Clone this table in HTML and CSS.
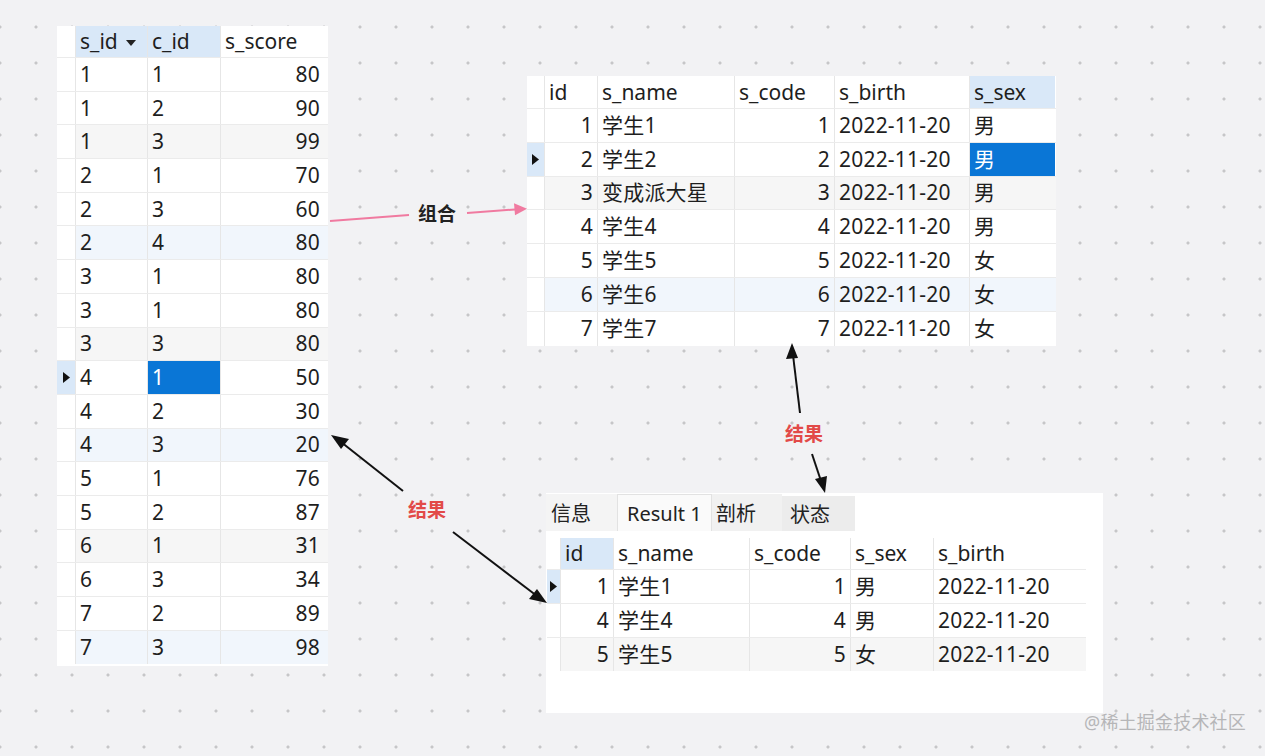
FILE: index.html
```html
<!DOCTYPE html>
<html lang="zh">
<head>
<meta charset="utf-8">
<title>SQL 组合结果</title>
<link rel="stylesheet" href="styles.css">
</head>
<body>
<div class="canvas">

  <div class="win win-score">
    <div class="tbl t-score">
      <div class="row head">
        <div class="c rh"></div>
        <div class="c hl">s_id <svg class="sort" width="10" height="6" viewBox="0 0 10 6"><path d="M0 0h10L5 6z" fill="#222"/></svg></div>
        <div class="c hl">c_id</div>
        <div class="c">s_score</div>
      </div>
      <div class="row"><div class="c rh"></div><div class="c">1</div><div class="c">1</div><div class="c r">80</div></div>
      <div class="row"><div class="c rh"></div><div class="c">1</div><div class="c">2</div><div class="c r">90</div></div>
      <div class="row g"><div class="c rh"></div><div class="c">1</div><div class="c">3</div><div class="c r">99</div></div>
      <div class="row"><div class="c rh"></div><div class="c">2</div><div class="c">1</div><div class="c r">70</div></div>
      <div class="row"><div class="c rh"></div><div class="c">2</div><div class="c">3</div><div class="c r">60</div></div>
      <div class="row b"><div class="c rh"></div><div class="c">2</div><div class="c">4</div><div class="c r">80</div></div>
      <div class="row"><div class="c rh"></div><div class="c">3</div><div class="c">1</div><div class="c r">80</div></div>
      <div class="row"><div class="c rh"></div><div class="c">3</div><div class="c">1</div><div class="c r">80</div></div>
      <div class="row g"><div class="c rh"></div><div class="c">3</div><div class="c">3</div><div class="c r">80</div></div>
      <div class="row"><div class="c rh cur"><svg width="7" height="11" viewBox="0 0 7 11"><path d="M0 0l7 5.5L0 11z" fill="#111"/></svg></div><div class="c">4</div><div class="c sel">1</div><div class="c r">50</div></div>
      <div class="row"><div class="c rh"></div><div class="c">4</div><div class="c">2</div><div class="c r">30</div></div>
      <div class="row b"><div class="c rh"></div><div class="c">4</div><div class="c">3</div><div class="c r">20</div></div>
      <div class="row"><div class="c rh"></div><div class="c">5</div><div class="c">1</div><div class="c r">76</div></div>
      <div class="row"><div class="c rh"></div><div class="c">5</div><div class="c">2</div><div class="c r">87</div></div>
      <div class="row g"><div class="c rh"></div><div class="c">6</div><div class="c">1</div><div class="c r">31</div></div>
      <div class="row"><div class="c rh"></div><div class="c">6</div><div class="c">3</div><div class="c r">34</div></div>
      <div class="row"><div class="c rh"></div><div class="c">7</div><div class="c">2</div><div class="c r">89</div></div>
      <div class="row b"><div class="c rh"></div><div class="c">7</div><div class="c">3</div><div class="c r">98</div></div>
    </div>
  </div>

  <div class="win win-student">
    <div class="tbl t-student">
      <div class="row head">
        <div class="c rh"></div>
        <div class="c">id</div>
        <div class="c">s_name</div>
        <div class="c">s_code</div>
        <div class="c">s_birth</div>
        <div class="c hl">s_sex</div>
      </div>
      <div class="row"><div class="c rh"></div><div class="c r">1</div><div class="c">学生1</div><div class="c r">1</div><div class="c">2022-11-20</div><div class="c">男</div></div>
      <div class="row"><div class="c rh cur"><svg width="7" height="11" viewBox="0 0 7 11"><path d="M0 0l7 5.5L0 11z" fill="#111"/></svg></div><div class="c r">2</div><div class="c">学生2</div><div class="c r">2</div><div class="c">2022-11-20</div><div class="c sel">男</div></div>
      <div class="row g"><div class="c rh"></div><div class="c r">3</div><div class="c">变成派大星</div><div class="c r">3</div><div class="c">2022-11-20</div><div class="c">男</div></div>
      <div class="row"><div class="c rh"></div><div class="c r">4</div><div class="c">学生4</div><div class="c r">4</div><div class="c">2022-11-20</div><div class="c">男</div></div>
      <div class="row"><div class="c rh"></div><div class="c r">5</div><div class="c">学生5</div><div class="c r">5</div><div class="c">2022-11-20</div><div class="c">女</div></div>
      <div class="row b"><div class="c rh"></div><div class="c r">6</div><div class="c">学生6</div><div class="c r">6</div><div class="c">2022-11-20</div><div class="c">女</div></div>
      <div class="row"><div class="c rh"></div><div class="c r">7</div><div class="c">学生7</div><div class="c r">7</div><div class="c">2022-11-20</div><div class="c">女</div></div>
    </div>
  </div>

  <div class="win win-result">
    <div class="tabs">
      <div class="tab t-info">信息</div>
      <div class="tab active">Result 1</div>
      <div class="tab t-prof">剖析</div>
      <div class="tab t-stat">状态</div>
    </div>
    <div class="tbl t-result">
      <div class="row head">
        <div class="c rh"></div>
        <div class="c hl">id</div>
        <div class="c">s_name</div>
        <div class="c">s_code</div>
        <div class="c">s_sex</div>
        <div class="c">s_birth</div>
      </div>
      <div class="row"><div class="c rh cur"><svg width="7" height="11" viewBox="0 0 7 11"><path d="M0 0l7 5.5L0 11z" fill="#111"/></svg></div><div class="c r">1</div><div class="c">学生1</div><div class="c r">1</div><div class="c">男</div><div class="c">2022-11-20</div></div>
      <div class="row"><div class="c rh"></div><div class="c r">4</div><div class="c">学生4</div><div class="c r">4</div><div class="c">男</div><div class="c">2022-11-20</div></div>
      <div class="row g"><div class="c rh"></div><div class="c r">5</div><div class="c">学生5</div><div class="c r">5</div><div class="c">女</div><div class="c">2022-11-20</div></div>
    </div>
  </div>

  <svg class="arrows" width="1265" height="756" viewBox="0 0 1265 756">
    <g stroke="#f07aa0" stroke-width="2" fill="none">
      <line x1="330" y1="221" x2="409" y2="215"/>
      <line x1="467" y1="213" x2="515" y2="209.5"/>
    </g>
    <path d="M527 208.7L514 203.2L515 215.2z" fill="#f07aa0"/>
    <g stroke="#111" stroke-width="2" fill="none">
      <line x1="341" y1="442" x2="403" y2="491"/>
      <line x1="453" y1="532" x2="537" y2="596"/>
      <line x1="793" y1="355" x2="800" y2="413"/>
      <line x1="812" y1="454" x2="821" y2="481"/>
    </g>
    <path d="M331 435L349 439L341 449z" fill="#111"/>
    <path d="M547 603L529 599L537 589z" fill="#111"/>
    <path d="M792 343L786 359L798 358z" fill="#111"/>
    <path d="M825 493L815 479L827 476z" fill="#111"/>
  </svg>

  <div class="label l-combine">组合</div>
  <div class="label red l-res1">结果</div>
  <div class="label red l-res2">结果</div>

  <div class="watermark">@稀土掘金技术社区</div>
</div>
</body>
</html>
```

FILE: styles.css
```css
* { box-sizing: border-box; }

html, body {
  margin: 0;
  padding: 0;
}

body {
  width: 1265px;
  height: 756px;
  overflow: hidden;
  background-color: #f2f2f4;
  background-image: radial-gradient(circle, #c6c6c8 1.3px, transparent 1.8px);
  background-size: 36px 36px;
  background-position: -18px 9px;
  font-family: "Noto Sans", "Noto Sans CJK SC", sans-serif;
  color: #1e1e1e;
}

.canvas {
  position: relative;
  width: 1265px;
  height: 756px;
}

.win {
  position: absolute;
  background: #fff;
}

.win-score {
  left: 57px;
  top: 26px;
  width: 271px;
  height: 640px;
}

.win-student {
  left: 527px;
  top: 76px;
  width: 529px;
  height: 270px;
}

.win-result {
  left: 546px;
  top: 493px;
  width: 557px;
  height: 220px;
  display: flex;
  flex-direction: column;
}

.tbl {
  display: flex;
  flex-direction: column;
  font-size: 21px;
  line-height: 1;
}

.row {
  display: grid;
  height: 33.8px;
  border-bottom: 1px solid #ebebeb;
}

.row:last-child { border-bottom: none; }

.row.head { height: 33px; }

.t-score .row { grid-template-columns: 19px 72px 73px 104px; height: 33.7px; }
.t-score .row.head { height: 32px; }
.t-student .row { grid-template-columns: 18px 53px 137px 100px 135px 85px; }
.t-result .row { grid-template-columns: 14px 53px 136px 101px 83px 151px; }
.t-result .row.head { height: 32px; }

.row.g { background: #f6f6f6; }
.row.b { background: #f1f6fc; }

.c {
  display: flex;
  align-items: center;
  padding: 0 4px;
  border-right: 1px solid #e6e6e6;
  white-space: nowrap;
  overflow: hidden;
  letter-spacing: 0.2px;
}

.c:last-child { border-right: none; }

.c.r {
  justify-content: flex-end;
  padding-right: 4px;
}

.t-score .c.r { padding-right: 5px; }

.c.rh {
  padding: 0;
  background: #fff;
  justify-content: center;
}

.row.head .c { background: #fff; letter-spacing: 0; }
.row.head .c.hl { background: #d9e8f8; }

.c.cur { background: #d9e8f8; }

.c.sel {
  background: #0a76d6;
  color: #fff;
}

.sort { margin-left: 8px; margin-top: 2px; }

.tabs {
  display: flex;
  height: 37px;
  margin-top: 1px;
  align-items: stretch;
  font-size: 20px;
}

.tab {
  display: flex;
  align-items: center;
  padding: 0 5px;
  color: #222;
}

.t-info { width: 71px; background: #f4f4f4; }
.tab.active {
  width: 95px;
  padding-left: 9px;
  background: #fafafa;
  border: 1px solid #e2e2e2;
  border-bottom: none;
}
.t-prof { width: 70px; padding-left: 4px; background: #f1f1f1; }
.t-stat { width: 73px; padding-left: 8px; margin-top: 2px; background: #ececec; }

.t-result {
  margin-top: 7px;
  margin-left: 1px;
  width: 539px;
}

.arrows {
  position: absolute;
  left: 0;
  top: 0;
  pointer-events: none;
}

.label {
  position: absolute;
  font-size: 19px;
  font-weight: 700;
  line-height: 1;
  color: #222;
}

.label.red { color: #e24a48; }

.l-combine { left: 418px; top: 205px; }
.l-res1 { left: 408px; top: 501px; }
.l-res2 { left: 785px; top: 425px; }

.watermark {
  position: absolute;
  left: 1084px;
  top: 712px;
  font-size: 18px;
  line-height: 1.2;
  color: #b6b6b8;
  letter-spacing: 0.2px;
}
```
